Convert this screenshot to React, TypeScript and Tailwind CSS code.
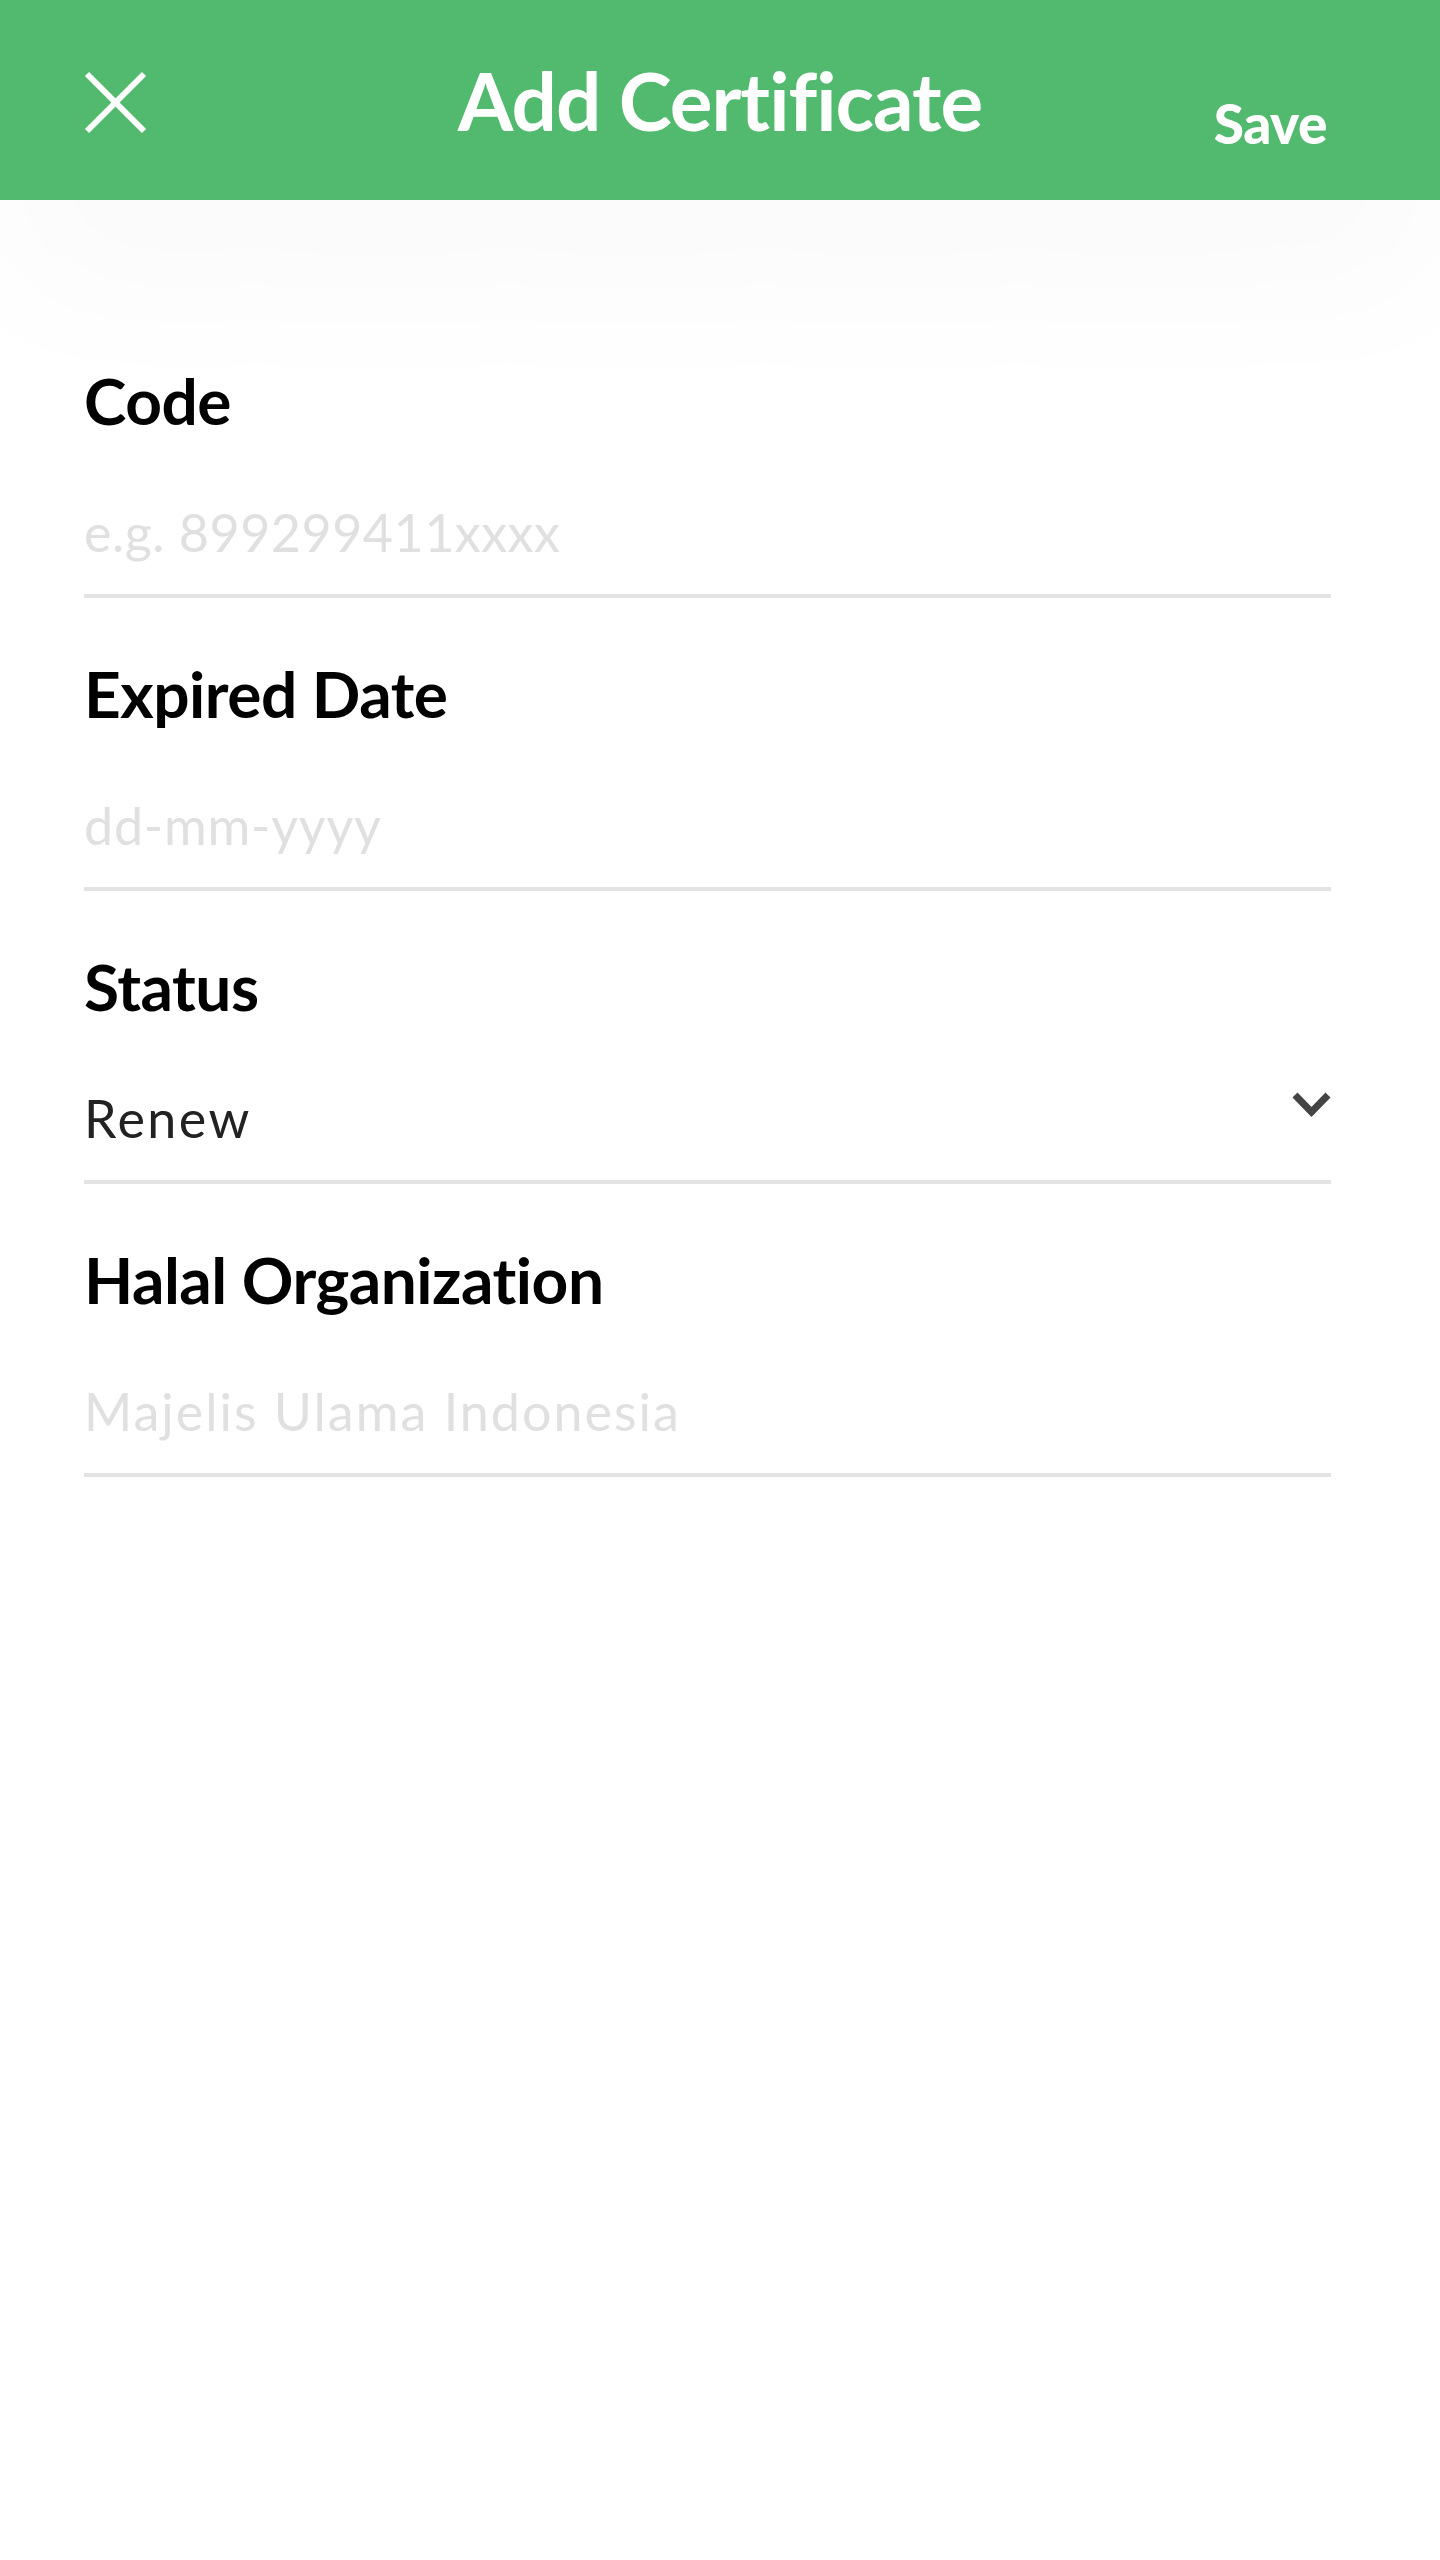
import React from "react";

const font = { fontFamily: '"Lato", "Open Sans", sans-serif' };

function Field({ label, children }: { label: string; children: React.ReactNode }) {
  return (
    <div className="flex flex-col">
      <div className="h-[80px] flex items-center text-[64px] font-bold text-black leading-none tracking-[-0.5px]">
        {label}
      </div>
      <div className="h-[80px] mt-[51px] flex items-center">{children}</div>
      <div className="mt-[22px] h-[4px] bg-[#e3e3e3]" />
    </div>
  );
}

export default function App() {
  return (
    <div className="w-[1440px] min-h-[2560px] bg-white relative overflow-hidden" style={font}>
      <header className="relative z-10 h-[200px] bg-[#52ba6f] grid grid-cols-[1fr_auto_1fr] items-center shadow-[0_90px_160px_rgba(0,0,0,0.025)]">
        <div className="pl-[84px] flex items-center">
          <svg width="63" height="63" viewBox="0 0 63 63" className="mt-[4px]">
            <path d="M3 3 L60 60 M60 3 L3 60" stroke="white" strokeWidth="6" />
          </svg>
        </div>
        <div className="text-white text-[80px] font-bold leading-none tracking-[-1px]">Add Certificate</div>
        <div className="flex justify-end pr-[113px]">
          <span className="text-white text-[55px] font-black leading-none mt-[46px] tracking-[-0.5px]">Save</span>
        </div>
      </header>
      <main className="pl-[84px] pr-[109px] pt-[161px] flex flex-col gap-[56px]">
        <Field label="Code">
          <span className="text-[52px] font-normal text-[#e0e0e0] leading-none tracking-[0.5px]">e.g. 899299411xxxx</span>
        </Field>
        <Field label="Expired Date">
          <span className="text-[52px] font-normal text-[#e0e0e0] leading-none tracking-[0.8px]">dd-mm-yyyy</span>
        </Field>
        <Field label="Status">
          <div className="flex-1 flex items-center justify-between">
            <span className="text-[52px] font-normal text-[#222222] leading-none tracking-[2.5px]">Renew</span>
            <svg width="39" height="26" viewBox="0 0 39 26" className="-mt-[26px]">
              <path d="M3 3 L19.5 20 L36 3" stroke="#444444" strokeWidth="7" fill="none" />
            </svg>
          </div>
        </Field>
        <Field label="Halal Organization">
          <span className="text-[52px] font-normal text-[#e0e0e0] leading-none tracking-[2px]">Majelis Ulama Indonesia</span>
        </Field>
      </main>
    </div>
  );
}
